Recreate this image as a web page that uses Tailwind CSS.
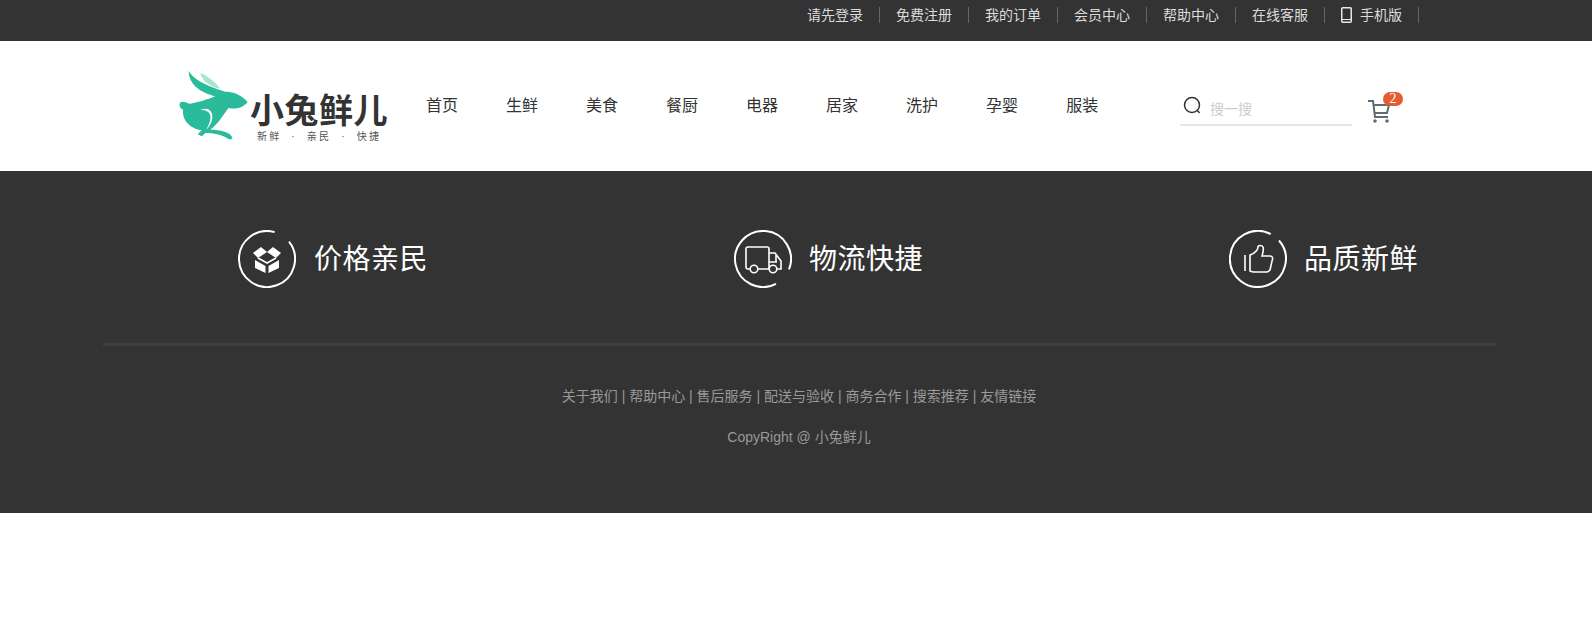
<!DOCTYPE html>
<html lang="zh-CN">
<head>
    <meta charset="UTF-8">
    <title>小兔鲜儿</title>
    <script src="https://cdn.jsdelivr.net/npm/@tailwindcss/browser@4"></script>
</head>
<body class="bg-white font-['Liberation_Sans','Noto_Sans_CJK_SC',sans-serif]">

<!-- 顶部通栏 -->
<div class="h-[41px] bg-[#333333]">
    <ul class="flex justify-end pr-[173px] pt-[7px] text-sm leading-[16px] text-[#dcdcdc]">
        <li class="px-4 border-r border-[#666666]">请先登录</li>
        <li class="px-4 border-r border-[#666666]">免费注册</li>
        <li class="px-4 border-r border-[#666666]">我的订单</li>
        <li class="px-4 border-r border-[#666666]">会员中心</li>
        <li class="px-4 border-r border-[#666666]">帮助中心</li>
        <li class="px-4 border-r border-[#666666]">在线客服</li>
        <li class="flex items-center gap-2 px-4 border-r border-[#666666]">
            <svg class="w-[11px] h-[16px]" viewBox="0 0 11 16" fill="none" stroke="#e8e8e8">
                <rect x="0.75" y="0.75" width="9.5" height="14.5" rx="1" stroke-width="1.5"/>
                <path d="M1 12.5h9" stroke-width="1"/>
            </svg>
            手机版
        </li>
    </ul>
</div>

<!-- 头部导航 -->
<header class="h-[130px] flex items-center pl-[177px]">
    <div class="flex items-start w-[249px]">
        <svg class="w-[74px] h-[77px] -mt-[2px]" viewBox="50 50 222 231">
            <path fill="#a5e6d2" d="M120 68C140 75 165 95 180 116C155 110 125 95 120 68Z"/>
            <path fill="#2abb9b" d="M85 62C98 85 130 105 195 124C215 124 240 130 262 155C250 172 225 178 205 173C190 190 175 220 150 238C180 238 210 245 216 262C215 270 205 268 195 260C175 250 150 247 135 248L125 258L112 252L124 240C95 235 65 215 68 178C58 175 54 160 62 155C70 152 80 158 88 160C110 158 140 148 165 138C125 128 85 105 85 62Z"/>
            <path fill="#ffffff" d="M120 178C135 172 150 174 155 190C159 208 150 226 138 238C147 222 153 206 149 192C145 181 132 179 120 178Z"/>
        </svg>
        <div class="-ml-px pt-[24px]">
            <div class="text-[34px] leading-[36px] font-bold tracking-[0.5px] text-[#333333] whitespace-nowrap">小兔鲜儿</div>
            <div class="mt-[2px] pl-[7px] text-[10px] leading-[12px] tracking-[2.2px] text-[#555555] whitespace-nowrap">新鲜 &nbsp;·&nbsp; 亲民 &nbsp;·&nbsp; 快捷</div>
        </div>
    </div>
    <nav class="flex gap-12 w-[753px] text-base text-[#333333]">
        <a href="#">首页</a>
        <a href="#">生鲜</a>
        <a href="#">美食</a>
        <a href="#">餐厨</a>
        <a href="#">电器</a>
        <a href="#">居家</a>
        <a href="#">洗护</a>
        <a href="#">孕婴</a>
        <a href="#">服装</a>
    </nav>
    <div class="flex items-center gap-[8px] w-[172px] h-[36px] mt-[4px] ml-px pl-[3px] border-b-2 border-[#e7e7e7]">
        <svg class="w-[19px] h-[19px] -mt-[4px]" viewBox="0 0 19 19" fill="none" stroke="#333333" stroke-width="1.5">
            <circle cx="9" cy="9" r="7.5"/>
            <path d="M14.5 14.5l2 2.5"/>
        </svg>
        <span class="text-sm text-[#cccccc] mt-[3px]">搜一搜</span>
    </div>
    <div class="relative ml-[16px] mt-[9px] w-[22px] h-[24px]">
        <svg class="w-[22px] h-[24px]" viewBox="0 0 22 24" fill="none" stroke="#5f6b73" stroke-width="2">
            <path d="M0 2h5l2 16h13"/>
            <path d="M6 6h15l-2 8H7"/>
            <circle cx="7" cy="22" r="1.8" fill="#5f6b73" stroke="none"/>
            <circle cx="19" cy="22" r="1.8" fill="#5f6b73" stroke="none"/>
        </svg>
        <span class="absolute -top-[7px] left-[15px] w-[20px] h-[14px] rounded-full bg-[#e55b33] text-white text-sm leading-[14px] text-center font-['Liberation_Serif',serif]">2</span>
    </div>
</header>

<!-- 页脚 -->
<footer class="h-[342px] bg-[#333333] pt-[59px]">
    <div class="flex justify-between ml-[238px] w-[1180px] text-white">
        <div class="flex items-center gap-[18px]">
            <svg class="w-[58px] h-[58px]" viewBox="0 0 58 58" fill="none" stroke="#ffffff" stroke-width="2">
                <path d="M51 11.7A28 28 0 1 1 36.7 2.1"/>
                <g fill="#ffffff" stroke="none">
                    <path d="M15 23l8-6 6 5-9 6z"/>
                    <path d="M43 23l-8-6-6 5 9 6z"/>
                    <path d="M17 30l10.5 6v7L17 38z"/>
                    <path d="M41 30l-10.5 6v7L41 38z"/>
                </g>
                <path d="M20 28l9 5 9-5" stroke-width="1.6"/>
            </svg>
            <span class="text-[28px] leading-[40px] tracking-[0.5px] pt-[2px]">价格亲民</span>
        </div>
        <div class="flex items-center gap-[17px]">
            <svg class="w-[58px] h-[58px]" viewBox="0 0 58 58" fill="none" stroke="#ffffff" stroke-width="2">
                <path d="M42 53.8A28 28 0 1 1 55 39.4"/>
                <path d="M16 39h-2a2 2 0 0 1-2-2V19a2 2 0 0 1 2-2h19a2 2 0 0 1 2 2v20H24M35 23h6l6 8v8h-4M35 32h8M42 25v7" stroke-width="1.6"/>
                <circle cx="20" cy="39" r="3.8" stroke-width="1.6"/>
                <circle cx="39" cy="39" r="3.8" stroke-width="1.6"/>
            </svg>
            <span class="text-[28px] leading-[40px] tracking-[0.5px] pt-[2px]">物流快捷</span>
        </div>
        <div class="flex items-center gap-[17px]">
            <svg class="w-[58px] h-[58px]" viewBox="0 0 58 58" fill="none" stroke="#ffffff" stroke-width="2">
                <path d="M50 10.5A28 28 0 1 1 41.7 4"/>
                <path d="M16 25v16" stroke-width="1.6"/>
                <path d="M21 41V25c6-2 8-6 8-8 0-2 4-2 5 0 1 3 0 6-1 9h8c3 0 3 3 2 5l-2 9c-1 1-2 2-3 2H25c-2 0-4-1-4-1z" stroke-width="1.6"/>
            </svg>
            <span class="text-[28px] leading-[40px] tracking-[0.5px] pt-[2px]">品质新鲜</span>
        </div>
    </div>
    <div class="w-[1393px] h-[3px] ml-[103px] mt-[55px] bg-[#3f3f3f]"></div>
    <p class="mt-[40px] pl-[6px] text-center text-sm leading-[20px] text-[#999999]">关于我们 | 帮助中心 | 售后服务 | 配送与验收 | 商务合作 | 搜索推荐 | 友情链接</p>
    <p class="mt-[21px] pl-[6px] text-center text-sm leading-[20px] text-[#999999]">CopyRight @ 小兔鲜儿</p>
</footer>

</body>
</html>
